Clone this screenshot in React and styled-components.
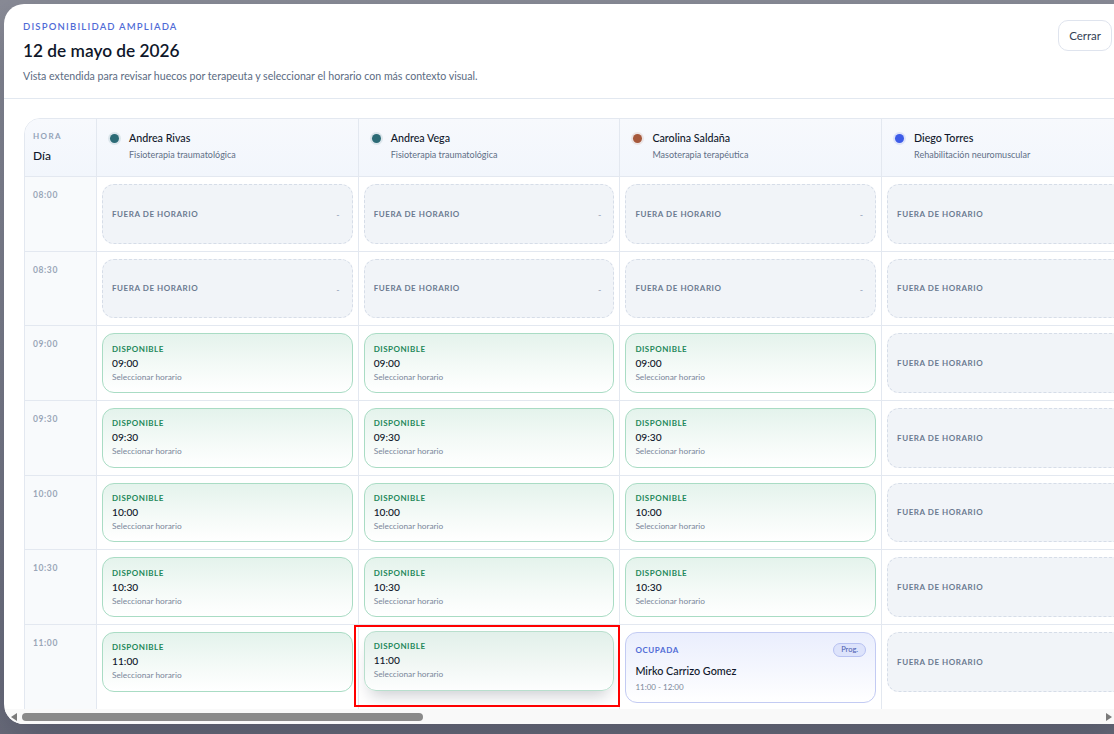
import React from 'react';
import styled, { createGlobalStyle, css } from 'styled-components';

const GlobalStyle = createGlobalStyle`
  html, body { margin: 0; padding: 0; height: 100%; }
  body {
    overflow: hidden;
    background: linear-gradient(180deg, #8a8c97 0%, #7c7e8b 50%, #6b6d7c 100%);
    font-family: Lato, "Noto Sans", sans-serif;
    color: #0f172a;
  }
  * { box-sizing: border-box; }
`;

const Backdrop = styled.div`
  height: 100vh;
  padding: 4px;
`;

const Modal = styled.div`
  width: 1130px;
  height: 720px;
  background: #ffffff;
  border-radius: 20px;
  overflow: hidden;
  display: flex;
  flex-direction: column;
  box-shadow: 0 20px 50px rgba(15, 23, 42, 0.25);
`;

const Header = styled.header`
  display: flex;
  justify-content: space-between;
  align-items: flex-start;
  padding: 17px 22px 14.5px 19px;
  border-bottom: 1px solid #e2e8f0;
  flex-shrink: 0;
`;

const Eyebrow = styled.div`
  font-size: 9.5px;
  line-height: 12px;
  font-weight: 600;
  letter-spacing: 1.2px;
  color: #4f6bd6;
  text-transform: uppercase;
`;

const Title = styled.h1`
  margin: 4.5px 0 0;
  font-size: 17.3px;
  line-height: 26px;
  font-weight: 600;
  color: #0f172a;
`;

const Subtitle = styled.p`
  margin: 4px 0 0;
  font-size: 10.6px;
  line-height: 16px;
  color: #5b6b82;
`;

const CloseButton = styled.button`
  margin-top: -1px;
  height: 31px;
  padding: 0 10px;
  border: 1px solid #dfe4ee;
  border-radius: 10px;
  background: #ffffff;
  font-family: inherit;
  font-size: 11.5px;
  color: #334155;
  cursor: pointer;
`;

const Body = styled.div`
  flex: 1;
  min-height: 0;
  overflow: hidden;
  padding: 19px 20px 20px 20px;
`;

const ScrollTrack = styled.div`
  flex-shrink: 0;
  height: 15px;
  display: flex;
  align-items: center;
  background: #f9f9f9;
  padding: 0 18px 0 2px;
`;

const ArrowButton = styled.span`
  flex-shrink: 0;
  width: 15px;
  height: 15px;
  display: flex;
  align-items: center;
  justify-content: center;
  &::before {
    content: '';
    width: 0;
    height: 0;
    border-top: 4px solid transparent;
    border-bottom: 4px solid transparent;
    ${(p) =>
      p.$dir === 'left'
        ? css`border-right: 6px solid #7a7a7a;`
        : css`border-left: 6px solid #7a7a7a;`}
  }
`;

const ThumbLane = styled.div`
  flex: 1;
  height: 100%;
  display: flex;
  align-items: center;
  padding-left: 1px;
`;

const Thumb = styled.div`
  width: 401px;
  height: 8px;
  border-radius: 4px;
  background: #8a8a8a;
`;

const Table = styled.div`
  display: grid;
  grid-template-columns: 72px repeat(${(p) => p.$cols}, 261.7px);
  width: max-content;
  border: 1px solid #e3e8f0;
  border-radius: 16px;
  overflow: hidden;
  background: #ffffff;
`;

const HeadCell = styled.div`
  height: 58px;
  padding: 11px 12px;
  background: linear-gradient(180deg, #f7f9fd 0%, #f2f6fc 100%);
  border-right: 1px solid #e3e8f0;
  border-bottom: 1px solid #e3e8f0;
  display: flex;
  align-items: flex-start;
  gap: 10px;
`;

const HourHead = styled(HeadCell)`
  flex-direction: column;
  gap: 0;
  padding: 11px 8px;
`;

const HourTag = styled.div`
  font-size: 8px;
  line-height: 12px;
  font-weight: 700;
  letter-spacing: 1.4px;
  color: #94a3b8;
`;

const DayLabel = styled.div`
  margin-top: 6px;
  font-size: 12px;
  line-height: 16px;
  font-weight: 500;
  color: #0f172a;
`;

const Dot = styled.span`
  flex-shrink: 0;
  width: 9px;
  height: 9px;
  margin-top: 3.5px;
  margin-left: 1px;
  border-radius: 50%;
  background: ${(p) => p.$color};
  box-shadow: 0 0 0 2px ${(p) => p.$color}1f;
`;

const TherapistInfo = styled.div`
  display: flex;
  flex-direction: column;
  min-width: 0;
`;

const TherapistName = styled.div`
  font-size: 10.7px;
  line-height: 15px;
  font-weight: 500;
  color: #0f172a;
  white-space: nowrap;
`;

const Specialty = styled.div`
  margin-top: 4px;
  font-size: 9px;
  line-height: 12px;
  color: #5f6f86;
  white-space: nowrap;
`;

const TimeCell = styled.div`
  padding: 12px 8px;
  background: #f8fafc;
  border-right: 1px solid #e3e8f0;
  border-bottom: 1px solid #e3e8f0;
  font-size: 8.5px;
  line-height: 12px;
  font-weight: 700;
  letter-spacing: 0.6px;
  color: #9aa6b8;
`;

const SlotCell = styled.div`
  position: relative;
  padding: 7px 5px;
  border-right: 1px solid #e3e8f0;
  border-bottom: 1px solid #e3e8f0;
  background: #ffffff;
`;

const cardBase = css`
  min-height: 59.67px;
  border-radius: 12px;
  padding: 9.5px 9px 8px;
`;

const OffCard = styled.div`
  ${cardBase};
  padding: 8px 12px 8px 9px;
  display: flex;
  align-items: center;
  justify-content: space-between;
  background: #f1f4f8;
  border: 1px dashed #d6dde8;
`;

const OffLabel = styled.span`
  font-size: 8px;
  font-weight: 700;
  letter-spacing: 0.55px;
  color: #6b7a90;
`;

const OffDash = styled.span`
  font-size: 9px;
  margin-top: 2px;
  color: #94a3b8;
`;

const FreeCard = styled.div`
  ${cardBase};
  display: flex;
  flex-direction: column;
  background: linear-gradient(180deg, #e4f3ec 0%, #f4faf7 55%, #ffffff 100%);
  border: 1px solid #a9dcc4;
  cursor: pointer;
  ${(p) =>
    p.$active &&
    css`
      transform: translateY(-1px);
      border-color: #b8dfcd;
      background: linear-gradient(180deg, #e1f0ea 0%, #f1f7f4 55%, #fdfefe 100%);
      box-shadow: 0 10px 16px -6px rgba(15, 23, 42, 0.22);
    `}
`;

const FreeLabel = styled.span`
  font-size: 8px;
  line-height: 11px;
  font-weight: 700;
  letter-spacing: 0.5px;
  color: #23885a;
`;

const SlotTime = styled.span`
  font-size: 10.2px;
  line-height: 16px;
  font-weight: 500;
  color: #0f172a;
`;

const SlotHint = styled.span`
  font-size: 8.3px;
  line-height: 12px;
  color: #7a879a;
`;

const BusyCard = styled.div`
  ${cardBase};
  padding: 10px 9px 9px;
  display: flex;
  flex-direction: column;
  background: linear-gradient(180deg, #eaeefd 0%, #f5f7fe 55%, #ffffff 100%);
  border: 1px solid #c3cbf3;
`;

const BusyTop = styled.div`
  display: flex;
  align-items: center;
  justify-content: space-between;
  height: 14px;
`;

const BusyLabel = styled.span`
  font-size: 8px;
  font-weight: 700;
  letter-spacing: 0.6px;
  color: #4f6bd6;
`;

const Pill = styled.span`
  height: 14px;
  padding: 0 7px;
  border-radius: 999px;
  border: 1px solid #b7c1f1;
  background: #dde3fb;
  font-size: 7.5px;
  line-height: 12px;
  color: #4a5bb0;
`;

const Patient = styled.span`
  margin-top: 6px;
  font-size: 10.8px;
  line-height: 15px;
  font-weight: 500;
  color: #0f172a;
`;

const BusyRange = styled.span`
  margin-top: 3px;
  font-size: 8px;
  line-height: 12px;
  color: #7a879a;
`;

const FocusRing = styled.div`
  position: absolute;
  left: -5px;
  top: 0;
  width: 266px;
  height: 82px;
  border: 2px solid #ff0000;
  pointer-events: none;
  z-index: 3;
`;

const therapists = [
  { name: 'Andrea Rivas', spec: 'Fisioterapia traumatológica', color: '#2c6b76', dash: true },
  { name: 'Andrea Vega', spec: 'Fisioterapia traumatológica', color: '#2c6b76', dash: true },
  { name: 'Carolina Saldaña', spec: 'Masoterapia terapéutica', color: '#a6583b', dash: true },
  { name: 'Diego Torres', spec: 'Rehabilitación neuromuscular', color: '#3d5ce8', dash: false },
  { name: 'Elena Márquez', spec: 'Fisioterapia deportiva', color: '#7c3aed', dash: true },
  { name: 'Fernando Ruiz', spec: 'Terapia manual', color: '#0f766e', dash: true },
  { name: 'Gabriela Soto', spec: 'Drenaje linfático', color: '#be185d', dash: true },
  { name: 'Hugo Paredes', spec: 'Rehabilitación postoperatoria', color: '#b45309', dash: true },
  { name: 'Inés Molina', spec: 'Fisioterapia respiratoria', color: '#2563eb', dash: true },
  { name: 'Javier Luna', spec: 'Osteopatía', color: '#15803d', dash: true },
  { name: 'Karla Núñez', spec: 'Pilates terapéutico', color: '#9333ea', dash: true },
];

const times = ['08:00', '08:30', '09:00', '09:30', '10:00', '10:30', '11:00', '11:30', '12:00', '12:30', '13:00', '13:30'];

function slotFor(ti, ri) {
  const t = therapists[ti];
  const time = times[ri];
  if (ti === 3) return { kind: 'off', dash: false };
  if (ri < 2) return { kind: 'off', dash: t.dash };
  if (ti === 2 && (ri === 6 || ri === 7)) {
    return { kind: 'busy', patient: 'Mirko Carrizo Gomez', range: '11:00 - 12:00' };
  }
  return { kind: 'free', time, active: ti === 1 && ri === 6 };
}

function Slot({ slot }) {
  if (slot.kind === 'off') {
    return (
      <OffCard>
        <OffLabel>FUERA DE HORARIO</OffLabel>
        {slot.dash && <OffDash>-</OffDash>}
      </OffCard>
    );
  }
  if (slot.kind === 'busy') {
    return (
      <BusyCard>
        <BusyTop>
          <BusyLabel>OCUPADA</BusyLabel>
          <Pill>Prog.</Pill>
        </BusyTop>
        <Patient>{slot.patient}</Patient>
        <BusyRange>{slot.range}</BusyRange>
      </BusyCard>
    );
  }
  return (
    <FreeCard $active={slot.active}>
      <FreeLabel>DISPONIBLE</FreeLabel>
      <SlotTime>{slot.time}</SlotTime>
      <SlotHint>Seleccionar horario</SlotHint>
    </FreeCard>
  );
}

export default function App() {
  return (
    <>
      <GlobalStyle />
      <Backdrop>
        <Modal>
          <Header>
            <div>
              <Eyebrow>Disponibilidad ampliada</Eyebrow>
              <Title>12 de mayo de 2026</Title>
              <Subtitle>
                Vista extendida para revisar huecos por terapeuta y seleccionar el horario con más contexto visual.
              </Subtitle>
            </div>
            <CloseButton>Cerrar</CloseButton>
          </Header>
          <Body>
            <Table $cols={therapists.length}>
              <HourHead>
                <HourTag>HORA</HourTag>
                <DayLabel>Día</DayLabel>
              </HourHead>
              {therapists.map((t) => (
                <HeadCell key={t.name}>
                  <Dot $color={t.color} />
                  <TherapistInfo>
                    <TherapistName>{t.name}</TherapistName>
                    <Specialty>{t.spec}</Specialty>
                  </TherapistInfo>
                </HeadCell>
              ))}
              {times.map((time, ri) => (
                <React.Fragment key={time}>
                  <TimeCell>{time}</TimeCell>
                  {therapists.map((t, ti) => {
                    const slot = slotFor(ti, ri);
                    return (
                      <SlotCell key={t.name}>
                        <Slot slot={slot} />
                        {slot.active && <FocusRing />}
                      </SlotCell>
                    );
                  })}
                </React.Fragment>
              ))}
            </Table>
          </Body>
          <ScrollTrack>
            <ArrowButton $dir="left" />
            <ThumbLane>
              <Thumb />
            </ThumbLane>
            <ArrowButton $dir="right" />
          </ScrollTrack>
        </Modal>
      </Backdrop>
    </>
  );
}
